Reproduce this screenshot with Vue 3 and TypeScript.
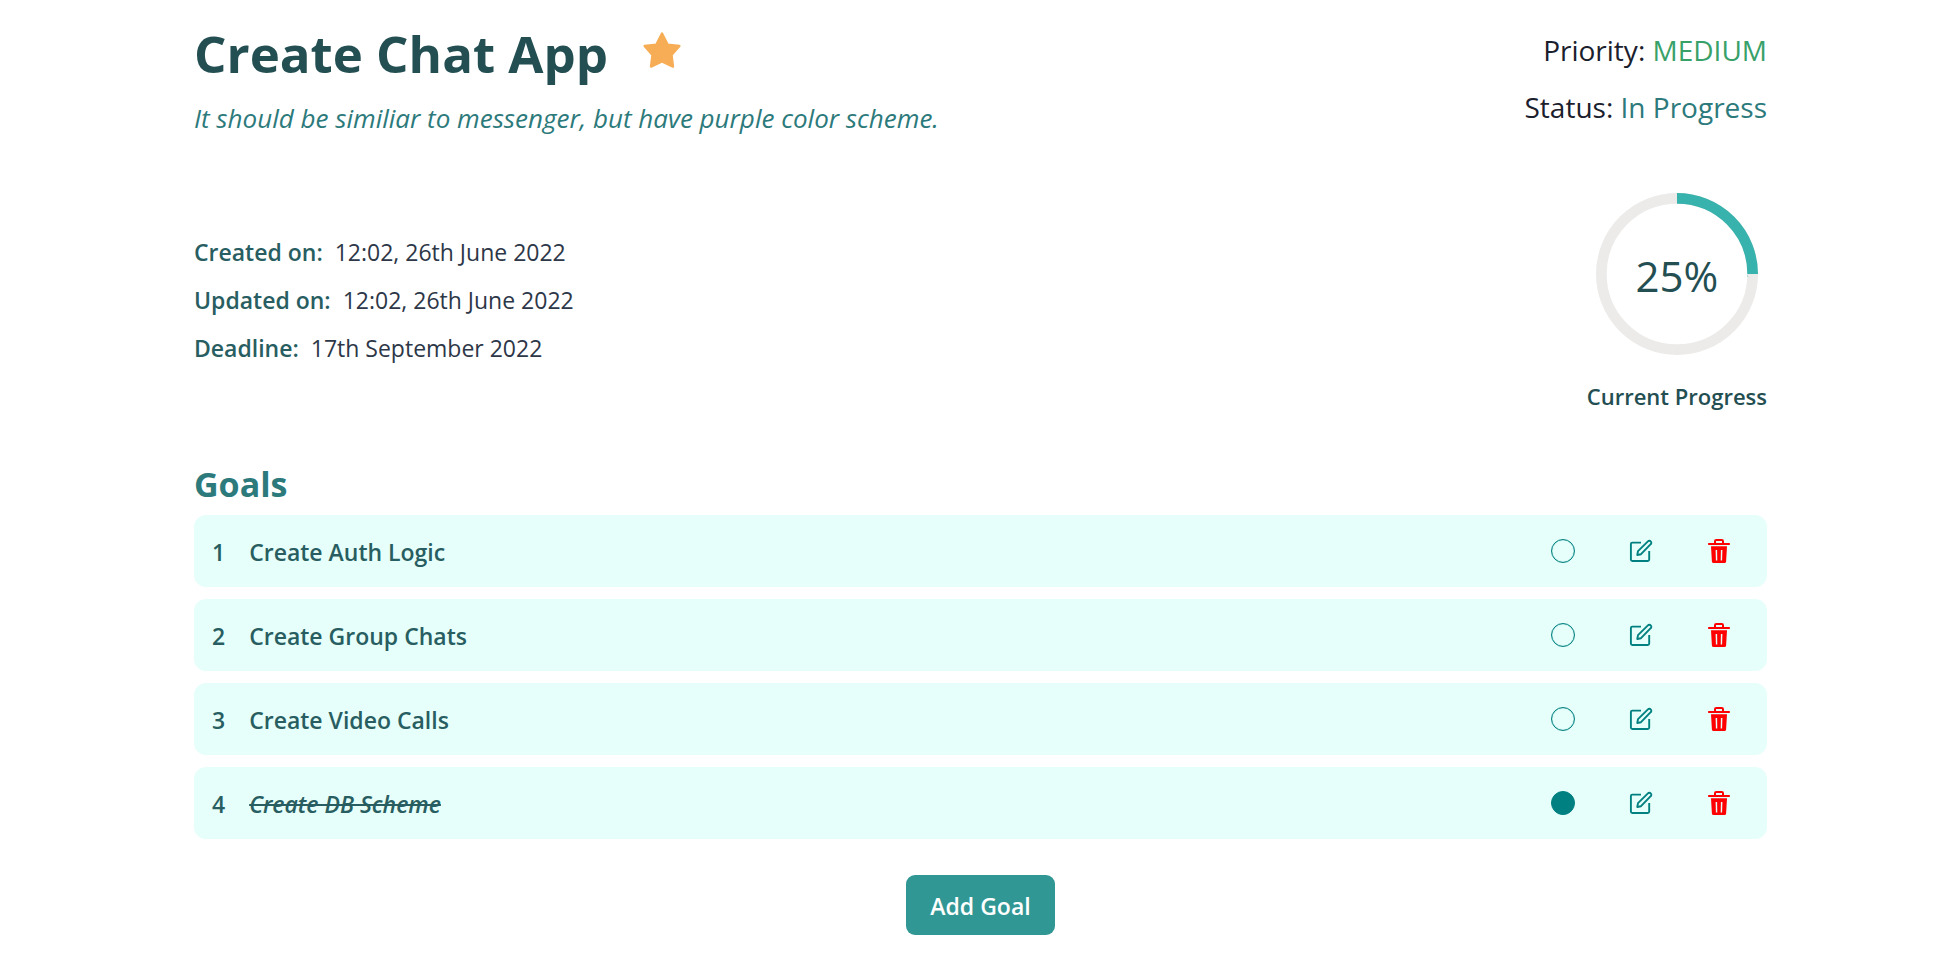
<script setup lang="ts">
import { computed, ref } from 'vue'

interface Goal {
  id: number
  title: string
  done: boolean
}

const goals = ref<Goal[]>([
  { id: 1, title: 'Create Auth Logic', done: false },
  { id: 2, title: 'Create Group Chats', done: false },
  { id: 3, title: 'Create Video Calls', done: false },
  { id: 4, title: 'Create DB Scheme', done: true },
])

const dates = [
  { label: 'Created on:', value: '12:02, 26th June 2022' },
  { label: 'Updated on:', value: '12:02, 26th June 2022' },
  { label: 'Deadline:', value: '17th September 2022' },
]

const progress = computed(() => {
  const total = goals.value.length
  return total ? Math.round((goals.value.filter((g) => g.done).length / total) * 100) : 0
})

function removeGoal(id: number) {
  goals.value = goals.value.filter((g) => g.id !== id)
}
</script>

<template>
  <main class="project">
    <header class="head">
      <div class="intro">
        <div class="title-row">
          <h1 class="title">Create Chat App</h1>
          <button class="icon-button star" type="button" aria-label="Favourite">
            <svg viewBox="0 0 40 40" width="40" height="40" aria-hidden="true">
              <path
                d="M20 3.6 L25.6 14.6 L37.4 15.9 L29.5 25 L31 36.6 L20 31.3 L9 36.6 L10.5 25 L2.6 15.9 L14.4 14.6 Z"
                fill="#f6ad55"
                stroke="#f6ad55"
                stroke-width="2.4"
                stroke-linejoin="round"
              />
            </svg>
          </button>
        </div>
        <p class="description">It should be similiar to messenger, but have purple color scheme.</p>
      </div>
      <div class="state">
        <p class="state-line">Priority: <span class="medium">MEDIUM</span></p>
        <p class="state-line">Status: <span class="in-progress">In Progress</span></p>
      </div>
    </header>

    <section class="details">
      <dl class="dates">
        <div v-for="d in dates" :key="d.label" class="date">
          <dt>{{ d.label }}</dt>
          <dd>{{ d.value }}</dd>
        </div>
      </dl>
      <div class="progress">
        <div class="ring">
          <svg viewBox="0 0 100 100" width="162" height="162" aria-hidden="true">
            <circle class="track" cx="50" cy="50" r="46.7" />
            <circle
              class="value"
              cx="50"
              cy="50"
              r="46.7"
              pathLength="100"
              :stroke-dasharray="`${progress} 100`"
              transform="rotate(-90 50 50)"
            />
          </svg>
          <span class="percent">{{ progress }}%</span>
        </div>
        <span class="progress-label">Current Progress</span>
      </div>
    </section>

    <section class="goals">
      <h2 class="goals-title">Goals</h2>
      <ul class="goal-list">
        <li v-for="(goal, i) in goals" :key="goal.id" class="goal">
          <span class="number">{{ i + 1 }}</span>
          <label class="name" :class="{ done: goal.done }" :for="`goal-${goal.id}`">{{ goal.title }}</label>
          <div class="actions">
            <input :id="`goal-${goal.id}`" v-model="goal.done" class="toggle" type="checkbox" />
            <button class="icon-button" type="button" :aria-label="`Edit ${goal.title}`">
              <svg viewBox="0 0 24 24" width="24" height="24" aria-hidden="true">
                <g fill="none" stroke="#008080" stroke-width="1.9" stroke-linejoin="round">
                  <path d="M12 3.6H3.4a1.5 1.5 0 0 0-1.5 1.5v15.4a1.5 1.5 0 0 0 1.5 1.5h15.3a1.5 1.5 0 0 0 1.5-1.5V12" />
                  <path d="M8.3 16l.7-3.9L18.9 2.4a1.9 1.9 0 0 1 2.8 0 1.9 1.9 0 0 1 0 2.8L12 15.2z" />
                </g>
              </svg>
            </button>
            <button
              class="icon-button"
              type="button"
              :aria-label="`Delete ${goal.title}`"
              @click="removeGoal(goal.id)"
            >
              <svg viewBox="0 0 24 24" width="24" height="24" aria-hidden="true">
                <path d="M8 5V2.2a1.2 1.2 0 0 1 1.2-1.2h5.6a1.2 1.2 0 0 1 1.2 1.2V5" fill="none" stroke="#f00" stroke-width="2" />
                <rect x="1" y="4" width="22" height="2" rx="0.8" fill="#f00" />
                <path
                  fill="#f00"
                  fill-rule="evenodd"
                  d="M4 7.2h16l-.9 15.2a1.7 1.7 0 0 1-1.7 1.6H6.6a1.7 1.7 0 0 1-1.7-1.6zM8.6 11l.3 10.4h1.4L10.1 11zM13.9 11l-.2 10.4h1.4l.3-10.4z"
                />
              </svg>
            </button>
          </div>
        </li>
      </ul>
      <button class="add" type="button">Add Goal</button>
    </section>
  </main>
</template>

<style>
body {
  margin: 0;
  background: #fff;
}
</style>

<style scoped>
.project {
  padding: 21px 190px 32px 194px;
  font-family: 'Segoe UI', 'Open Sans', 'Noto Sans', sans-serif;
  color: #1a202c;
}

h1, h2, p, dl, dd, ul {
  margin: 0;
  padding: 0;
}

.head, .details {
  display: flex;
  justify-content: space-between;
  align-items: flex-start;
}

.title-row {
  display: flex;
  align-items: center;
  gap: 34px;
}

.title {
  font-size: 51px;
  line-height: 64px;
  font-weight: 700;
  color: #234e52;
}

.icon-button {
  display: flex;
  padding: 0;
  border: 0;
  background: none;
  cursor: pointer;
}

.star {
  margin-bottom: 6px;
}

.description {
  margin-top: 13px;
  font-size: 26px;
  line-height: 40px;
  font-style: italic;
  color: #2c7a7b;
}

.state {
  display: flex;
  flex-direction: column;
  gap: 12px;
  padding-top: 7px;
  text-align: right;
}

.state-line {
  font-size: 28px;
  line-height: 45px;
}

.medium {
  color: #38a169;
}

.in-progress {
  color: #2c7a7b;
}

.details {
  margin-top: 55px;
}

.dates {
  display: flex;
  flex-direction: column;
  gap: 16px;
  padding-top: 43px;
}

.date {
  display: flex;
  gap: 12px;
  font-size: 23px;
  line-height: 32px;
}

.date dt {
  font-weight: 600;
  color: #285e61;
}

.date dd {
  color: #2d3748;
}

.progress {
  display: flex;
  flex-direction: column;
  align-items: center;
  gap: 25px;
}

.ring {
  display: grid;
  place-items: center;
}

.ring > * {
  grid-area: 1 / 1;
}

.ring circle {
  fill: none;
  stroke-width: 6.6;
}

.track {
  stroke: #edebe9;
}

.value {
  stroke: #38b2ac;
}

.percent {
  padding-top: 4px;
  font-size: 42px;
  line-height: 56px;
  color: #234e52;
}

.progress-label {
  font-size: 22px;
  line-height: 32px;
  font-weight: 600;
  color: #234e52;
}

.goals {
  display: flex;
  flex-direction: column;
  margin-top: 50px;
}

.goals-title {
  font-size: 34px;
  line-height: 44px;
  font-weight: 700;
  color: #2c7a7b;
}

.goal-list {
  display: flex;
  flex-direction: column;
  gap: 12px;
  margin-top: 9px;
  list-style: none;
}

.goal {
  display: flex;
  align-items: center;
  padding: 19px 36px 19px 18px;
  border-radius: 12px;
  background: #e6fffa;
  font-size: 23px;
  line-height: 32px;
  font-weight: 600;
  color: #285e61;
}

.number,
.name {
  padding-top: 2px;
}

.name {
  margin-left: 24px;
}

.done {
  font-style: italic;
  text-decoration: line-through;
}

.actions {
  display: flex;
  align-items: center;
  gap: 54px;
  margin-left: auto;
}

.toggle {
  appearance: none;
  width: 24px;
  height: 24px;
  margin: 0;
  box-sizing: border-box;
  border: 1px solid #008080;
  border-radius: 50%;
  box-shadow: inset 0 0 1px #008080;
  cursor: pointer;
}

.toggle:checked {
  background: #008080;
}

.add {
  align-self: center;
  margin-top: 36px;
  padding: 15px 24px 13px;
  border: 0;
  border-radius: 9px;
  background: #319795;
  color: #fff;
  font-family: inherit;
  font-size: 23px;
  line-height: 32px;
  font-weight: 600;
  cursor: pointer;
}
</style>
